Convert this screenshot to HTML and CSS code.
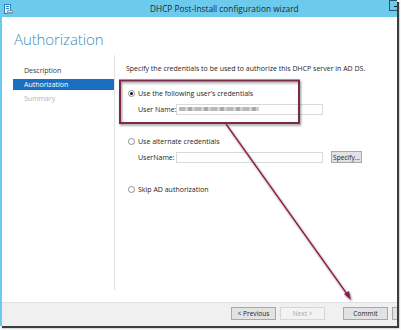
FILE: index.html
```html
<!DOCTYPE html>
<html>
<head>
<meta charset="utf-8">
<link rel="stylesheet" href="styles.css">
</head>
<body>
<div class="page">
  <div class="window">
    <div class="titlebar">
      <svg class="appicon" width="9" height="11" viewBox="0 0 9 11">
        <rect x="0.5" y="0.5" width="6" height="9" fill="#e8f4fb" stroke="#2a7fc0"/>
        <rect x="2" y="2" width="3" height="1" fill="#2a7fc0"/>
        <rect x="2" y="4" width="3" height="1" fill="#2a7fc0"/>
        <rect x="3" y="6" width="6" height="4" rx="1" fill="#8a9aa8"/>
        <rect x="4" y="7" width="4" height="1" fill="#d9e2ea"/>
      </svg>
      <span class="title">DHCP Post-Install configuration wizard</span>
      <div class="winbtn"></div>
    </div>
    <div class="body">
      <h1 class="heading">Authorization</h1>
      <div class="main">
        <nav class="nav">
          <div class="nav-item">Description</div>
          <div class="nav-item active">Authorization</div>
          <div class="nav-item disabled">Summary</div>
        </nav>
        <section class="content">
          <p class="intro">Specify the credentials to be used to authorize this DHCP server in AD DS.</p>
          <div class="option first">
            <span class="radio checked"></span><span>Use the following user's credentials</span>
          </div>
          <div class="field">
            <span class="label">User Name:</span>
            <span class="input"><span class="blurred"></span></span>
          </div>
          <div class="option">
            <span class="radio"></span><span>Use alternate credentials</span>
          </div>
          <div class="field">
            <span class="label">UserName:</span>
            <span class="input"></span>
            <span class="btn small">Specify...</span>
          </div>
          <div class="option">
            <span class="radio"></span><span>Skip AD authorization</span>
          </div>
        </section>
      </div>
      <div class="footer">
        <span class="btn">&lt; Previous</span>
        <span class="btn disabled">Next &gt;</span>
        <span class="btn commit">Commit</span>
        <span class="btn cut"></span>
      </div>
    </div>
  </div>
  <svg class="annot" width="401" height="330" viewBox="0 0 401 330">
    <defs>
      <filter id="sh" x="-10%" y="-10%" width="130%" height="140%">
        <feDropShadow dx="1" dy="1.5" stdDeviation="1" flood-color="#000" flood-opacity="0.45"/>
      </filter>
    </defs>
    <rect x="120" y="80.5" width="179" height="42.5" fill="none" stroke="#7b2a4c" stroke-width="2" filter="url(#sh)"/>
    <g filter="url(#sh)">
      <line x1="226" y1="124" x2="347" y2="294" stroke="#8a1f4d" stroke-width="1.3"/>
      <polygon points="351,300 344,294 349,291" fill="#8a1f4d"/>
    </g>
  </svg>
</div>
</body>
</html>
```

FILE: styles.css
```css
* { box-sizing: border-box; }
html, body { margin: 0; padding: 0; background: #ffffff; }
body { font-family: "Open Sans", "Noto Sans", sans-serif; font-size: 7px; color: #262626; }

.page { position: relative; width: 401px; height: 330px; overflow: hidden; background: #fafafa; }

.window {
  width: 397px;
  height: 326px;
  display: flex;
  flex-direction: column;
  background: #ffffff;
  box-shadow: 2px 2px 1px #3c3c3c;
  overflow: hidden;
}

.titlebar {
  height: 17px;
  background: #6ccbec;
  display: flex;
  align-items: center;
  padding-left: 4px;
  flex: none;
}
.appicon { flex: none; margin-top: 1px; }
.title { margin-left: 137px; font-size: 8.3px; color: #1c2a33; white-space: nowrap; }
.winbtn {
  margin-left: auto;
  width: 8px;
  height: 11px;
  margin-top: -6px;
  border: 1px solid #2c5566;
  border-right: none;
  position: relative;
}
.winbtn::after { content: ""; position: absolute; left: 4px; top: 5px; width: 4px; height: 1px; background: #111; }

.body {
  flex: 1;
  display: flex;
  flex-direction: column;
  border-left: 2px solid #6ccbec;
  min-height: 0;
}

.heading {
  margin: 12px 0 0 12px;
  font-size: 15px;
  line-height: 20px;
  font-weight: 300;
  color: #3f8cb8;
  font-family: "Open Sans", "Noto Sans", sans-serif;
  letter-spacing: -0.1px;
}

.main { flex: 1; display: flex; margin-top: 6px; margin-bottom: 12px; min-height: 0; }

.nav {
  width: 113px;
  flex: none;
  border-right: 1px solid #e2e2e2;
  padding-top: 10px;
  display: flex;
  flex-direction: column;
  gap: 3px;
}
.nav-item {
  margin-left: 11px;
  height: 11px;
  line-height: 11px;
  padding-left: 11px;
  color: #3a3a3a;
}
.nav-item.active { background: #1b6fc0; color: #ffffff; }
.nav-item.disabled { color: #b4b4b4; }

.content { flex: 1; padding: 8px 0 0 11px; }
.intro { margin: 0; height: 12px; line-height: 12px; white-space: nowrap; }

.option { display: flex; align-items: center; height: 12px; margin-top: 20px; padding-left: 2px; white-space: nowrap; }
.option.first { margin-top: 12px; }
.radio {
  width: 7px; height: 7px; border-radius: 50%;
  border: 1px solid #8e8e8e; background: #fff;
  margin-right: 3px; flex: none;
  display: flex; align-items: center; justify-content: center;
}
.radio.checked::after { content: ""; width: 3px; height: 3px; border-radius: 50%; background: #111; }

.field { display: flex; align-items: center; height: 12px; margin-top: 4px; padding-left: 12px; }
.label { width: 38px; flex: none; white-space: nowrap; }
.input {
  width: 147px; height: 11px; border: 1px solid #d9d9d9; background: #fff;
  display: flex; align-items: center; padding-left: 2px; flex: none;
}
.blurred {
  width: 80px; height: 4px;
  background: repeating-linear-gradient(90deg, #b8b8b8 0 6px, #d4d4d4 6px 9px, #a9a9a9 9px 13px, #cfcfcf 13px 16px);
  filter: blur(0.7px);
}

.btn {
  display: inline-flex; align-items: center; justify-content: center;
  height: 13px; width: 45px;
  border: 1px solid #a8a8a8; background: #e2e2e2;
  font-size: 6.6px; color: #222; flex: none; white-space: nowrap;
}
.btn.small { width: 31px; height: 12px; margin-left: 8px; }
.btn.disabled { border-color: #d6d6d6; background: #f3f3f3; color: #a8a8a8; margin-left: 4px; }
.btn.commit { margin-left: 18px; }
.btn.cut { margin-left: 4px; }

.footer {
  height: 24px;
  flex: none;
  background: #f0f0f0;
  border-top: 1px solid #e0e0e0;
  display: flex;
  padding: 4px 0 0 229px;
  align-items: flex-start;
}

.annot { position: absolute; left: 0; top: 0; pointer-events: none; }
```
